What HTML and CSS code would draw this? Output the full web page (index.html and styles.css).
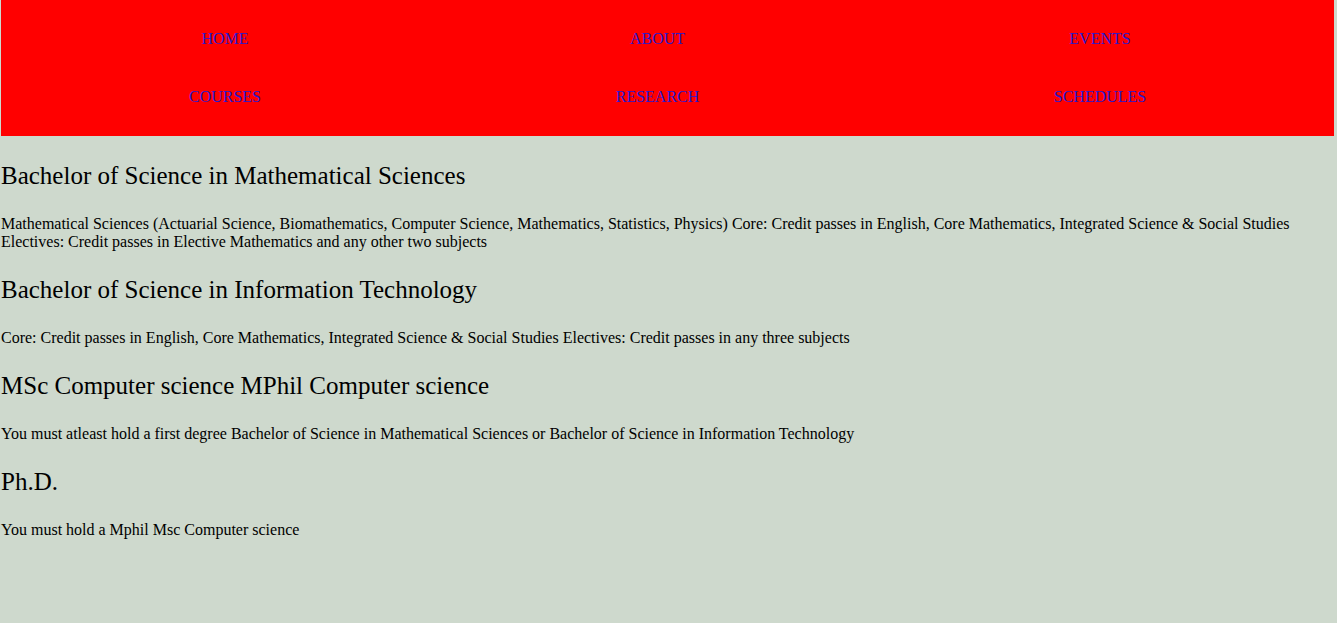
FILE: index.html
```html
<!DOCTYPE html>
<html lang="en">
<head>
<meta charset="utf-8">
<title>Courses</title>
<link rel="stylesheet" href="styles.css">
</head>
<body>
<header class="topnav">
  <nav class="nav-grid">
    <a class="nav-link" href="#">HOME</a>
    <a class="nav-link" href="#">ABOUT</a>
    <a class="nav-link" href="#">EVENTS</a>
    <a class="nav-link" href="#">COURSES</a>
    <a class="nav-link" href="#">RESEARCH</a>
    <a class="nav-link" href="#">SCHEDULES</a>
  </nav>
</header>
<main class="content">
  <h2 class="course-title">Bachelor of Science in Mathematical Sciences</h2>
  <p class="course-text">Mathematical Sciences (Actuarial Science, Biomathematics, Computer Science, Mathematics, Statistics, Physics) Core: Credit passes in English, Core Mathematics, Integrated Science &amp; Social Studies Electives: Credit passes in Elective Mathematics and any other two subjects</p>
  <h2 class="course-title">Bachelor of Science in Information Technology</h2>
  <p class="course-text">Core: Credit passes in English, Core Mathematics, Integrated Science &amp; Social Studies Electives: Credit passes in any three subjects</p>
  <h2 class="course-title">MSc Computer science MPhil Computer science</h2>
  <p class="course-text">You must atleast hold a first degree Bachelor of Science in Mathematical Sciences or Bachelor of Science in Information Technology</p>
  <h2 class="course-title">Ph.D.</h2>
  <p class="course-text">You must hold a Mphil Msc Computer science</p>
</main>
</body>
</html>
```
FILE: styles.css
```css
html, body {
  margin: 0;
  padding: 0;
}
body {
  background: #ced9cd;
  font-family: "Liberation Serif", "Times New Roman", serif;
  color: #000;
  padding: 0 3px 0 1px;
  min-height: 623px;
  box-sizing: border-box;
}
.topnav {
  background: #ff0000;
  padding: 10px 0 10px;
}
.nav-grid {
  display: grid;
  grid-template-columns: 448px 417px 468px;
  grid-auto-rows: 58px;
}
.nav-link {
  display: flex;
  align-items: center;
  justify-content: center;
  color: #2a1acc;
  text-decoration: none;
  font-family: "Liberation Serif", "Times New Roman", serif;
  font-size: 16px;
  line-height: 18px;
}
.content {
  padding-top: 1px;
}
.course-title {
  font-family: "Liberation Serif", "Times New Roman", serif;
  font-size: 25px;
  font-weight: 400;
  line-height: 28px;
  margin: 25px 0;
}
.course-text {
  font-family: "Liberation Serif", "Times New Roman", serif;
  font-size: 16px;
  line-height: 18px;
  margin: 16px 0;
}
```
